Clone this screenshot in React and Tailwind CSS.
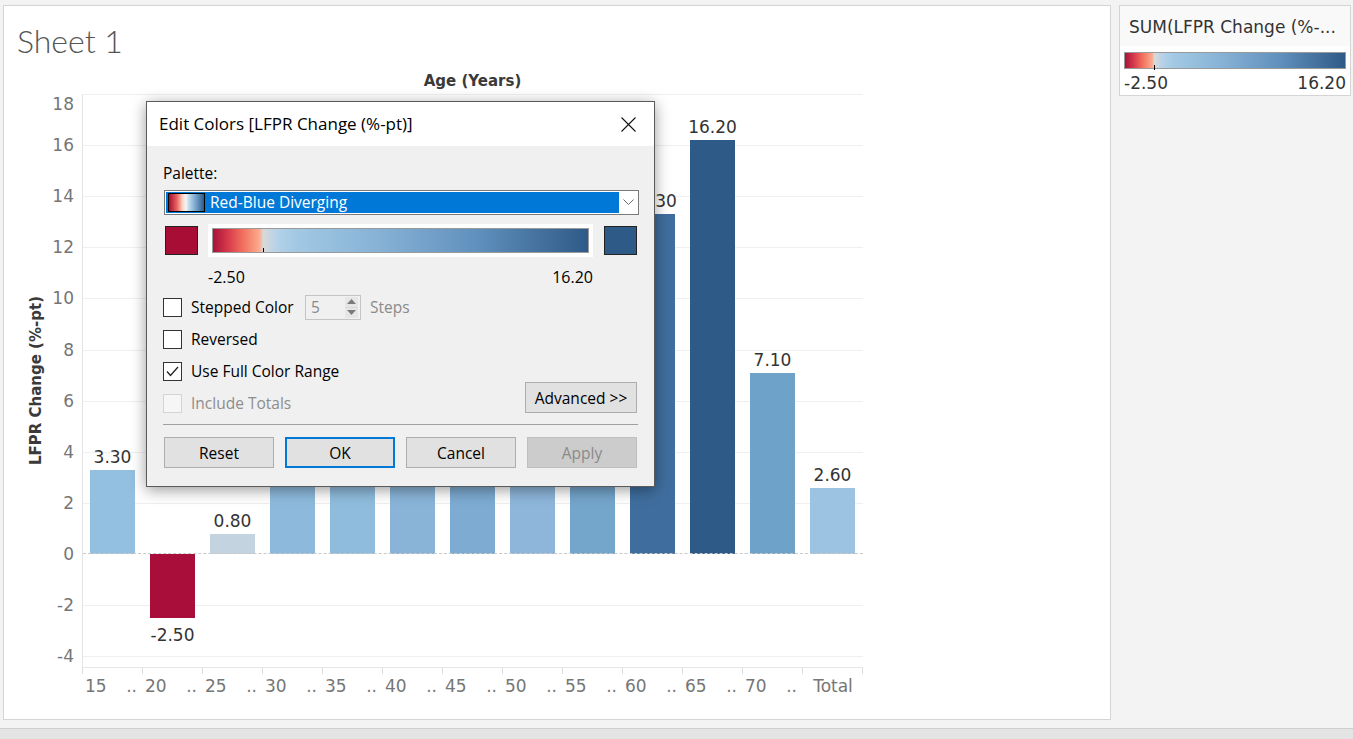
import React from 'react';

const UNIT = 460 / 18;

const TAB = "font-['DejaVu_Sans',sans-serif]";
const WIN = "font-['Open_Sans',sans-serif]";

const GRADIENT =
  'bg-[linear-gradient(to_right,#a8123a_0%,#d63a4b_4%,#f2705e_8%,#fbab8f_12.4%,#d9d9d9_13.4%,#b5d2e8_17%,#a2c9e4_22%,#87b2d6_44%,#5f8fbc_71%,#46739f_86%,#2d5a87_100%)]';

const bars = [
  { label: '15', value: 3.3, color: '#93bfe0' },
  { label: '20', value: -2.5, color: '#a90e3a' },
  { label: '25', value: 0.8, color: '#c3d3df' },
  { label: '30', value: 4.1, color: '#8dbadc' },
  { label: '35', value: 3.9, color: '#8fbcdd' },
  { label: '40', value: 4.5, color: '#89b4d8' },
  { label: '45', value: 5.6, color: '#7dabd1' },
  { label: '50', value: 4.3, color: '#8db6da' },
  { label: '55', value: 6.4, color: '#74a5cb' },
  { label: '60', value: 13.3, color: '#3f6e9e' },
  { label: '65', value: 16.2, color: '#2d5a87' },
  { label: '70', value: 7.1, color: '#6fa2c8' },
  { label: 'Total', value: 2.6, color: '#9cc3e2' },
];

const ticks = [18, 16, 14, 12, 10, 8, 6, 4, 2, 0, -2, -4];

const Checkbox = ({ checked, disabled, label }) => (
  <div className="flex items-center h-[32px]">
    <span
      className={`w-[19px] h-[19px] border flex items-center justify-center ${
        disabled ? 'border-[#d4d4d4] bg-[#f6f6f6]' : 'border-[#333333] bg-white'
      }`}
    >
      {checked && (
        <svg width="13" height="11" viewBox="0 0 13 11">
          <polyline points="1,5.5 4.5,9.5 12,1" fill="none" stroke="#222" strokeWidth="1.3" />
        </svg>
      )}
    </span>
    <span className={`ml-[9px] pt-[2px] text-[15.5px] ${disabled ? 'text-[#8d8d8d]' : 'text-black'}`}>{label}</span>
  </div>
);

const Btn = ({ children, primary, disabled, className = '' }) => (
  <div
    className={`h-[31px] flex items-center justify-center pt-[2px] text-[15.5px] ${
      primary
        ? 'border-2 border-[#0078d7] bg-[#e1e1e1] text-black'
        : disabled
        ? 'border border-[#bfbfbf] bg-[#cccccc] text-[#8a8a8a]'
        : 'border border-[#adadad] bg-[#e1e1e1] text-black'
    } ${className}`}
  >
    {children}
  </div>
);

const Chart = () => (
  <div className="flex">
    {/* y title */}
    <div className="w-[48px] h-[574px] flex items-center pl-[22px]">
      <span className={`${TAB} [writing-mode:vertical-rl] rotate-180 text-[15px] leading-[20px] font-bold text-[#3a3a3a] whitespace-nowrap`}>
        LFPR Change (%-pt)
      </span>
    </div>
    {/* y tick labels */}
    <div className="w-[30px] h-[574px] relative">
      {ticks.map((t) => (
        <span
          key={t}
          className={`${TAB} absolute right-[8px] text-[17px] leading-[20px] text-[#767676]`}
          style={{ top: (t === 18 ? 10 : (18 - t) * UNIT) - 10 }}
        >
          {t}
        </span>
      ))}
    </div>
    <div className="flex flex-col">
      {/* plot */}
      <div className="relative w-[781px] h-[574px] border-l border-[#e3e3e3]">
        {ticks.map((t) =>
          t === 0 ? null : (
            <div key={t} className="absolute left-0 right-0 h-px bg-[#efefef]" style={{ top: (18 - t) * UNIT }} />
          )
        )}
        <div className="absolute left-0 right-0 bottom-0 h-px bg-[#e6e6e6]" />
        <div className="relative flex h-full">
          {bars.map((b) => (
            <div key={b.label} className="w-[60px] h-full flex flex-col">
              <div className="h-[460px] flex flex-col justify-end pl-[7px]">
                {b.value >= 0 && (
                  <>
                    <div className={`${TAB} w-[45px] flex justify-center whitespace-nowrap text-[17px] leading-[20px] mb-[3px] text-[#333333]`}>
                      {b.value.toFixed(2)}
                    </div>
                    <div className="w-[45px]" style={{ height: b.value * UNIT, backgroundColor: b.color }} />
                  </>
                )}
              </div>
              <div className="h-[114px] pl-[7px]">
                {b.value < 0 && (
                  <>
                    <div className="w-[45px]" style={{ height: -b.value * UNIT, backgroundColor: b.color }} />
                    <div className={`${TAB} w-[45px] flex justify-center whitespace-nowrap text-[17px] leading-[20px] mt-[7px] text-[#333333]`}>
                      {b.value.toFixed(2)}
                    </div>
                  </>
                )}
              </div>
            </div>
          ))}
        </div>
        <div className="absolute left-0 right-0 top-[459px] border-t border-dashed border-[#c8c8c8]" />
      </div>
      {/* x ticks */}
      <div className="flex h-[6px] border-l border-[#dddddd]">
        {bars.map((b) => (
          <div key={b.label} className="w-[60px] h-full border-r border-[#dddddd]" />
        ))}
      </div>
      <div className="flex mt-[2px] pl-px">
        {bars.map((b) =>
          b.label === 'Total' ? (
            <div key={b.label} className={`${TAB} w-[60px] text-center text-[17px] leading-[20px] text-[#767676]`}>
              Total
            </div>
          ) : (
            <div key={b.label} className={`${TAB} w-[60px] flex justify-between pl-[2px] pr-[6px] text-[17px] leading-[20px] text-[#767676]`}>
              <span>{b.label}</span>
              <span>..</span>
            </div>
          )
        )}
      </div>
    </div>
  </div>
);

const EditColorsDialog = () => (
  <div className={`${WIN} absolute left-[146px] top-[101px] w-[509px] h-[386px] border border-[#5a5a5a] bg-[#f0f0f0] shadow-[0_3px_14px_rgba(0,0,0,0.4)] flex flex-col`}>
    <div className="h-[44px] bg-white flex items-center justify-between pl-[12px] pr-[18px]">
      <span className="text-[17px] text-black">Edit Colors [LFPR Change (%-pt)]</span>
      <svg width="15" height="15" viewBox="0 0 15 15">
        <path d="M0.5 0.5 L14.5 14.5 M14.5 0.5 L0.5 14.5" stroke="#111" strokeWidth="1.1" />
      </svg>
    </div>
    <div className="px-[16px] flex flex-col">
      <div className="mt-[17px] text-[15.5px] leading-[20px] text-black">Palette:</div>
      {/* palette dropdown */}
      <div className="mt-[7px] ml-px w-[475px] h-[25px] border border-[#7a7a7a] bg-white p-px flex">
        <div className="flex-1 bg-[#0078d7] flex items-center">
          <div className="ml-[2px] w-[37px] h-[19px] border border-black bg-[linear-gradient(to_right,#a50f34_0%,#e8615d_22%,#fbd0c0_38%,#f4f4f4_48%,#bcd7ea_58%,#6f9fc8_78%,#2d5a87_100%)]" />
          <span className="ml-[5px] pt-px text-[15.5px] text-white">Red-Blue Diverging</span>
        </div>
        <div className="w-[18px] flex items-center justify-center">
          <svg width="11" height="7" viewBox="0 0 11 7">
            <polyline points="0.5,0.5 5.5,5.5 10.5,0.5" fill="none" stroke="#6d6d6d" strokeWidth="1" />
          </svg>
        </div>
      </div>
      {/* color range row */}
      <div className="mt-[9px] h-[33px] flex items-center">
        <div className="ml-[2px] w-[33px] h-[29px] border border-[#222222] bg-[#a80d36]" />
        <div className="ml-[10px] w-[385px] h-[33px] bg-white px-[4px] py-[4px]">
          <div className={`relative w-full h-full border border-[#9a9a9a] ${GRADIENT}`}>
            <div className="absolute left-[50px] bottom-0 w-px h-[4px] bg-black" />
          </div>
        </div>
        <div className="ml-[11px] w-[33px] h-[29px] border border-[#222222] bg-[#2d5a87]" />
      </div>
      <div className="mt-[10px] ml-[45px] w-[385px] flex justify-between text-[16px] leading-[20px] text-black">
        <span>-2.50</span>
        <span>16.20</span>
      </div>
      {/* options */}
      <div className="mt-[4px] flex items-center h-[32px]">
        <span className="w-[19px] h-[19px] border border-[#333333] bg-white" />
        <span className="ml-[9px] pt-[2px] w-[114px] text-[15.5px] text-black">Stepped Color</span>
        <div className="w-[56px] h-[25px] border border-[#c4c4c4] flex items-center justify-between pl-[5px] pr-[2px]">
          <span className="pt-px text-[15.5px] text-[#8a8a8a]">5</span>
          <div className="w-[13px] h-[21px] flex flex-col">
            <div className="flex-1 flex items-center justify-center border-b border-[#d8d8d8] bg-[#e6e6e6]">
              <svg width="9" height="5" viewBox="0 0 9 5">
                <polygon points="4.5,0 9,5 0,5" fill="#7a7a7a" />
              </svg>
            </div>
            <div className="flex-1 flex items-center justify-center bg-[#e6e6e6]">
              <svg width="9" height="5" viewBox="0 0 9 5">
                <polygon points="0,0 9,0 4.5,5" fill="#7a7a7a" />
              </svg>
            </div>
          </div>
        </div>
        <span className="ml-[9px] pt-[2px] text-[15.5px] text-[#8a8a8a]">Steps</span>
      </div>
      <Checkbox label="Reversed" />
      <div className="flex justify-between">
        <div className="flex flex-col">
          <Checkbox checked label="Use Full Color Range" />
          <Checkbox disabled label="Include Totals" />
        </div>
        <Btn className="self-end mb-[6px] mr-px w-[112px]">Advanced &gt;&gt;</Btn>
      </div>
      <div className="mt-[5px] h-px bg-[#a0a0a0]" />
      <div className="mt-[12px] ml-px flex gap-[11px]">
        <Btn className="w-[110px]">Reset</Btn>
        <Btn primary className="w-[110px]">OK</Btn>
        <Btn className="w-[110px]">Cancel</Btn>
        <Btn disabled className="w-[110px]">Apply</Btn>
      </div>
    </div>
  </div>
);

const Legend = () => (
  <div className={`${TAB} w-[232px] h-[91px] border border-[#d4d4d4] bg-white flex flex-col`}>
    <div className="h-[40px] bg-[#f9f9f9] pl-[9px] pt-px text-[17px] leading-[40px] text-[#333333] whitespace-nowrap">
      SUM(LFPR Change (%-...
    </div>
    <div className={`relative mt-[6px] ml-[4px] w-[222px] h-[17px] border border-[#9a9a9a] ${GRADIENT}`}>
      <div className="absolute left-[29px] bottom-[-2px] w-px h-[5px] bg-black" />
    </div>
    <div className="mt-[4px] px-[4px] flex justify-between text-[17px] leading-[20px] text-[#333333]">
      <span>-2.50</span>
      <span>16.20</span>
    </div>
  </div>
);

export default function App() {
  return (
    <div className="relative w-[1353px] h-[739px] bg-[#f3f3f3] flex flex-col overflow-hidden">
      <div className="h-[728px] flex pt-[5px] pl-[3px] gap-[8px]">
        <div className="w-[1108px] h-[715px] border border-[#d4d4d4] bg-white flex flex-col">
          <div className="h-[65px] pl-[13px] pt-[15px]">
            <span className="font-['Lato',sans-serif] font-light text-[32px] leading-[40px] text-[#555555]">Sheet 1</span>
          </div>
          <div className={`${TAB} h-[23px] ml-[78px] w-[781px] text-center font-bold text-[15px] leading-[20px] text-[#3a3a3a]`}>
            Age (Years)
          </div>
          <Chart />
        </div>
        <Legend />
      </div>
      <div className="h-[11px] border-t border-[#cfcfcf] bg-[#e4e4e4]" />
      <EditColorsDialog />
    </div>
  );
}
